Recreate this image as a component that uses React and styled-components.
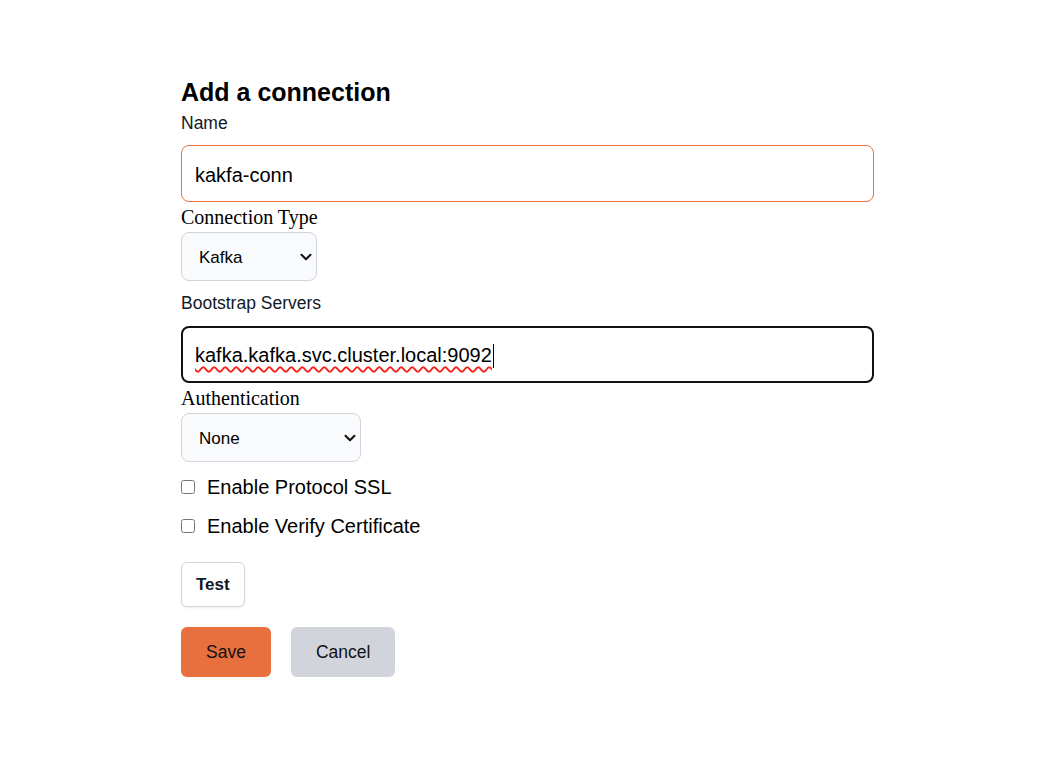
import React from 'react';

import styled, { createGlobalStyle } from 'styled-components';

const GlobalStyle = createGlobalStyle`
  body {
    margin: 0;
    background: #ffffff;
    font-family: "Liberation Sans", Arial, sans-serif;
  }
`;

function Chevron() {
  return (
    <ChevronIcon width="12" height="8" viewBox="0 0 12 8" aria-hidden="true">
      <path d="M1.5 1.8 6 6.2l4.5-4.4" fill="none" stroke="#111" strokeWidth="2.1" strokeLinecap="round" strokeLinejoin="round" />
    </ChevronIcon>
  );
}

function SelectField({ id, width, defaultValue, children }) {
  return (
    <SelectWrap $width={width}>
      <Select id={id} defaultValue={defaultValue}>
        {children}
      </Select>
      <Chevron />
    </SelectWrap>
  );
}

export default function App() {
  return (
    <>
      <GlobalStyle />
      <Page>
        <Form onSubmit={(e) => e.preventDefault()}>
          <Title>Add a connection</Title>
          <Label htmlFor="conn-name">Name</Label>
          <TextInput id="conn-name" defaultValue="kakfa-conn" spellCheck={false} />

          <SerifLabel htmlFor="conn-type">Connection Type</SerifLabel>
          <SelectField id="conn-type" width={136} defaultValue="kafka">
            <option value="kafka">Kafka</option>
            <option value="postgres">Postgres</option>
          </SelectField>

          <Label htmlFor="bootstrap" $spaced>Bootstrap Servers</Label>
          <ActiveField id="bootstrap" role="textbox" contentEditable suppressContentEditableWarning>
            <Misspelled>kafka.kafka.svc.cluster.local:9092</Misspelled>
            <Caret />
          </ActiveField>

          <SerifLabel htmlFor="auth">Authentication</SerifLabel>
          <SelectField id="auth" width={180} defaultValue="none">
            <option value="none">None</option>
            <option value="sasl">SASL</option>
          </SelectField>

          <Checks>
            <CheckRow>
              <Checkbox type="checkbox" />
              Enable Protocol SSL
            </CheckRow>
            <CheckRow>
              <Checkbox type="checkbox" />
              Enable Verify Certificate
            </CheckRow>
          </Checks>

          <TestButton type="button">Test</TestButton>

          <Actions>
            <ActionButton type="submit" $variant="primary">Save</ActionButton>
            <ActionButton type="button">Cancel</ActionButton>
          </Actions>
        </Form>
      </Page>
    </>
  );
}

const Page = styled.div`
  padding: 77px 0 60px 181px;
`;

const Form = styled.form`
  display: flex;
  flex-direction: column;
  align-items: flex-start;
  width: 693px;
`;

const Title = styled.h2`
  margin: 0;
  font-size: 25px;
  line-height: 30px;
  font-weight: 700;
  color: #000;
`;

const Label = styled.label`
  margin-top: ${(p) => (p.$spaced ? '12px' : '6px')};
  font-size: 17.5px;
  line-height: 20px;
  color: #111827;
`;

const SerifLabel = styled.label`
  margin-top: 4px;
  font-family: "Liberation Serif", "Times New Roman", serif;
  font-size: 20px;
  line-height: 23px;
  color: #000;
`;

const fieldBase = `
  box-sizing: border-box;
  width: 100%;
  height: 57px;
  border-radius: 8px;
  background: #fff;
  font-family: "Liberation Sans", Arial, sans-serif;
  font-size: 20px;
  color: #000;
  outline: none;
`;

const TextInput = styled.input`
  ${fieldBase}
  margin-top: 12px;
  padding: 4px 13px 0;
  border: 1px solid #e8703f;
`;

const ActiveField = styled.div`
  ${fieldBase}
  display: flex;
  align-items: center;
  margin-top: 13px;
  padding: 2px 12px 0;
  border: 2px solid #111111;
  white-space: nowrap;
  caret-color: transparent;
`;

const Misspelled = styled.span`
  text-decoration: underline wavy #f5221b;
  text-decoration-thickness: 1.5px;
  text-underline-offset: 4px;
  text-decoration-skip-ink: none;
`;

const Caret = styled.span`
  display: inline-block;
  width: 1px;
  height: 24px;
  margin-left: 1px;
  background: #000;
`;

const SelectWrap = styled.div`
  position: relative;
  width: ${(p) => p.$width}px;
  margin-top: 3px;
`;

const Select = styled.select`
  box-sizing: border-box;
  width: 100%;
  height: 49px;
  padding: 2px 28px 0 17px;
  border: 1px solid #d1d5db;
  border-radius: 8px;
  background: #f9fafb;
  appearance: none;
  font-family: "Liberation Sans", Arial, sans-serif;
  font-size: 17px;
  color: #000;
`;

const ChevronIcon = styled.svg`
  position: absolute;
  right: 5px;
  top: 21px;
  pointer-events: none;
`;

const Checks = styled.div`
  display: flex;
  flex-direction: column;
  gap: 16px;
  margin-top: 14px;
`;

const CheckRow = styled.label`
  display: flex;
  align-items: center;
  gap: 12px;
  font-size: 20px;
  line-height: 23px;
  color: #000;
`;

const Checkbox = styled.input`
  width: 14px;
  height: 14px;
  margin: 0 0 2px 0;
`;

const TestButton = styled.button`
  box-sizing: border-box;
  height: 45px;
  margin-top: 24px;
  padding: 0 14px;
  border: 1px solid #d1d5db;
  border-radius: 6px;
  background: #fff;
  box-shadow: 0 1px 2px rgba(0, 0, 0, 0.08);
  font-family: "Liberation Sans", Arial, sans-serif;
  font-size: 17px;
  font-weight: 700;
  color: #111827;
`;

const Actions = styled.div`
  display: flex;
  gap: 20px;
  margin-top: 20px;
`;

const ActionButton = styled.button`
  box-sizing: border-box;
  height: 50px;
  padding: 0 25px;
  border: none;
  border-radius: 6px;
  background: ${(p) => (p.$variant === 'primary' ? '#e8703f' : '#d1d5db')};
  font-family: "Liberation Sans", Arial, sans-serif;
  font-size: 17.5px;
  color: #111;
`;
